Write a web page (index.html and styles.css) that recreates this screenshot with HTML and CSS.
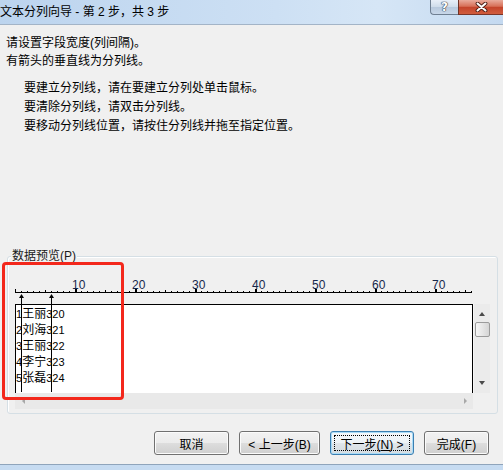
FILE: index.html
```html
<!DOCTYPE html>
<html lang="zh-CN">

<head>
    <meta charset="UTF-8">
    <title>文本分列向导 - 第 2 步，共 3 步</title>
    <link rel="stylesheet" href="styles.css">
</head>

<body>
    <div class="titlebar">
        <span class="title">文本分列向导 - 第 2 步，共 3 步</span>
        <div class="caption-btns">
            <span class="cap-help">?</span>
            <span class="cap-close">
                <svg width="13" height="10" viewBox="0 0 13 10">
                    <path d="M2.5 1.5 L10.5 8.5 M10.5 1.5 L2.5 8.5" stroke="#4b1d14" stroke-width="3.8" stroke-linecap="round" />
                    <path d="M2.5 1.5 L10.5 8.5 M10.5 1.5 L2.5 8.5" stroke="#fff" stroke-width="2" stroke-linecap="round" />
                </svg>
            </span>
        </div>
    </div>

    <div class="intro">
        <p>请设置字段宽度(列间隔)。</p>
        <p>有箭头的垂直线为分列线。</p>
    </div>

    <div class="hints">
        <p>要建立分列线，请在要建立分列处单击鼠标。</p>
        <p>要清除分列线，请双击分列线。</p>
        <p>要移动分列线位置，请按住分列线并拖至指定位置。</p>
    </div>

    <div class="group">
        <span class="group-label">数据预览(P)</span>
        <div class="preview">
            <div class="ruler">
                <span>10</span><span>20</span><span>30</span><span>40</span><span>50</span><span>60</span><span>70</span>
            </div>
            <div class="view">
                <div class="data">
                    <div class="row">1<span class="cj">王丽</span>320</div>
                    <div class="row">2<span class="cj">刘海</span>321</div>
                    <div class="row">3<span class="cj">王丽</span>322</div>
                    <div class="row">4<span class="cj">李宁</span>323</div>
                    <div class="row">5<span class="cj">张磊</span>324</div>
                </div>
                <div class="vscroll">
                    <i class="arrow-up"></i>
                    <i class="thumb"></i>
                    <i class="spacer"></i>
                    <i class="arrow-down"></i>
                </div>
            </div>
            <div class="hscroll">
                <i class="arrow-left"></i>
                <i class="arrow-right"></i>
            </div>
            <!-- column break lines sit on top of the ruler and data -->
            <svg class="breaks" width="60" height="120" viewBox="0 0 60 120">
                <polygon points="4,24 6.5,20 9,24" fill="#000" />
                <rect x="6" y="23" width="1" height="95" fill="#000" />
                <polygon points="34,24 36.5,20 39,24" fill="#000" />
                <rect x="36" y="23" width="1" height="95" fill="#000" />
            </svg>
        </div>
    </div>

    <div class="buttons">
        <button class="btn btn-cancel">取消</button>
        <button class="btn btn-back">&lt; 上一步(B)</button>
        <button class="btn btn-next">下一步(<u>N</u>) &gt;</button>
        <button class="btn btn-finish">完成(F)</button>
    </div>

    <div class="frame-bottom"></div>

    <div class="mark"></div>
</body>

</html>
```

FILE: styles.css
```css
body {
    margin: 0;
    width: 503px;
    height: 470px;
    overflow: hidden;
    position: relative;
    background: #f0f0f0;
    color: #000;
    font-family: "Liberation Sans", "Noto Sans CJK SC", sans-serif;
    font-size: 12px;
}

p {
    margin: 0;
}

.titlebar {
    position: relative;
    height: 24px;
    border-bottom: 1px solid #a3b4c7;
    background: linear-gradient(to right, #bcd4ee 0%, #cde0f4 55%, #d6e6f6 75%, #c4d9f0 100%);
}

.title {
    line-height: 24px;
    white-space: nowrap;
}

/* window caption buttons sit over the right end of the title bar */
.caption-btns {
    position: absolute;
    top: 0;
    right: 0;
    z-index: 2;
    display: flex;
}

.cap-help {
    width: 28px;
    height: 15px;
    box-sizing: border-box;
    border: 1px solid #6f7f92;
    border-top: none;
    border-right: none;
    border-radius: 0 0 0 4px;
    background-color: #c4d3e4;
    background-image: linear-gradient(#e8eff8, #cfdcea 50%, #b8c9dd 52%, #c8d7e9);
    color: #fff;
    font: bold 12px/14px "DejaVu Sans", sans-serif;
    text-align: center;
    text-shadow: 0 0 1px #2a3446, 0 0 1px #2a3446, 0 0 1px #2a3446;
}

.cap-close {
    width: 45px;
    height: 15px;
    box-sizing: border-box;
    border-left: 1px solid #6e3327;
    border-bottom: 1px solid #7a3528;
    background-color: #cc4a30;
    background-image: linear-gradient(#e9ab9c, #d77058 45%, #c4442b 52%, #d05d3e);
    display: flex;
    justify-content: center;
    align-items: center;
}

.intro {
    padding: 9px 0 0 6px;
    line-height: 18px;
}

.hints {
    margin-top: 9px;
    padding-left: 24px;
    line-height: 19px;
}

.group {
    position: relative;
    margin: 120px 0 0 7px;
    width: 491px;
    height: 158px;
    box-sizing: border-box;
    padding: 17px 0 0 7px;
    border: 1px solid #d5dfe5;
    border-radius: 3px;
    box-shadow: inset 1px 1px 0 #fff;
}

.group-label {
    position: absolute;
    top: -9px;
    left: 3px;
    padding: 0 1px;
    line-height: 17px;
    background: #f0f0f0;
    color: #1a1a1a;
}

.preview {
    position: relative;
    width: 475px;
}

.ruler {
    height: 30px;
    box-sizing: border-box;
    padding: 4px 0 0 57px;
    line-height: 14px;
    display: flex;
    color: #17284c;
    background:
        linear-gradient(#000, #000) 0 18px / 457px 1px no-repeat,
        linear-gradient(#000, #000) 0 15px / 1px 3px no-repeat,
        repeating-linear-gradient(to right, #000 0 2px, transparent 2px 60px) 60px 15px / 398px 3px no-repeat,
        repeating-linear-gradient(to right, #000 0 1px, transparent 1px 30px) 0 16px / 457px 2px no-repeat,
        repeating-linear-gradient(to right, #000 0 1px, transparent 1px 6px) 0 17px / 457px 1px no-repeat;
}

.ruler span {
    flex: none;
    width: 60px;
}

.view {
    display: flex;
}

.data {
    width: 458px;
    height: 89px;
    box-sizing: border-box;
    border: 1px solid #000;
    border-bottom: none;
    background: #fff;
    font-size: 11px;
}

.row {
    height: 16px;
    line-height: 16px;
    white-space: nowrap;
}

.cj {
    font-family: "Noto Sans CJK SC", sans-serif;
    font-size: 12px;
}

.vscroll {
    width: 17px;
    height: 89px;
    box-sizing: border-box;
    padding: 8px 0;
    background: #ebebeb;
    border-left: 1px solid #f6f6f6;
    display: flex;
    flex-direction: column;
    align-items: center;
}

.arrow-up {
    width: 0;
    height: 0;
    border-style: solid;
    border-color: transparent transparent #4a4a4a;
    border-width: 0 3px 4px;
}

.arrow-down {
    width: 0;
    height: 0;
    border-style: solid;
    border-color: #4a4a4a transparent transparent;
    border-width: 4px 3px 0;
}

.thumb {
    margin-top: 6px;
    width: 15px;
    height: 15px;
    box-sizing: border-box;
    border: 1px solid #9b9b9b;
    border-radius: 2px;
    background: linear-gradient(to right, #f6f6f6, #e6e6e6 50%, #d5d5d5);
}

.spacer {
    flex: 1;
}

.hscroll {
    width: 458px;
    height: 16px;
    box-sizing: border-box;
    padding: 0 6px 0 7px;
    background: #e9e9e9;
    display: flex;
    justify-content: space-between;
    align-items: center;
}

.arrow-left {
    width: 0;
    height: 0;
    border-style: solid;
    border-color: transparent #a8a8a8 transparent transparent;
    border-width: 3px 3px 3px 0;
}

.arrow-right {
    width: 0;
    height: 0;
    border-style: solid;
    border-color: transparent transparent transparent #a8a8a8;
    border-width: 3px 0 3px 3px;
}

.breaks {
    position: absolute;
    left: 0;
    top: 0;
}

.buttons {
    display: flex;
    gap: 10px;
    margin-top: 17px;
    padding-left: 154px;
}

.btn {
    flex: none;
    height: 24px;
    box-sizing: border-box;
    padding: 0;
    border: 1px solid #707070;
    border-radius: 3px;
    background: linear-gradient(#f2f2f2, #ebebeb 50%, #dddddd 51%, #cfcfcf);
    box-shadow: inset 0 0 0 1px #fbfbfb;
    color: #000;
    font: 12px "Liberation Sans", "Noto Sans CJK SC", sans-serif;
}

.btn-cancel {
    width: 75px;
}

.btn-back {
    width: 81px;
}

.btn-next {
    position: relative;
    width: 84px;
    border-color: #3c7fb1;
    box-shadow: inset 0 0 0 1px #a9dcf8;
    background: linear-gradient(#f4f8fb, #edf2f6 50%, #e0e6eb 51%, #d4dbe0);
}

.btn-next::after {
    content: "";
    position: absolute;
    inset: 3px;
    border: 1px dotted #000;
}

.btn-finish {
    width: 65px;
}

.frame-bottom {
    margin-top: 9px;
    height: 6px;
    border-top: 1px solid #8fa4bb;
    background: #c6dbf1;
}

.mark {
    position: absolute;
    left: 2px;
    top: 262px;
    width: 122px;
    height: 138px;
    box-sizing: border-box;
    border: 3px solid #f3281c;
    border-radius: 4px;
}
```
